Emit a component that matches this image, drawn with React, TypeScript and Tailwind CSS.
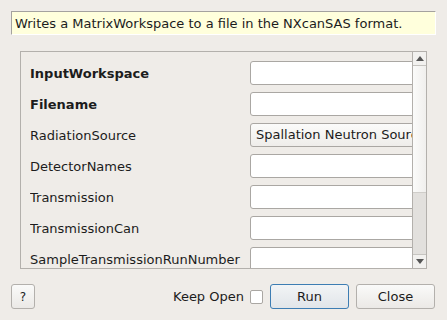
const rows: { label: string; bold?: boolean; value?: string; combo?: boolean }[] = [
  { label: "InputWorkspace", bold: true },
  { label: "Filename", bold: true },
  { label: "RadiationSource", value: "Spallation Neutron Source", combo: true },
  { label: "DetectorNames" },
  { label: "Transmission" },
  { label: "TransmissionCan" },
  { label: "SampleTransmissionRunNumber" },
];

export default function App() {
  return (
    <div className="w-[447px] h-[320px] bg-[#efece8] font-['DejaVu_Sans',sans-serif] text-[13px] text-[#1c1c1c] flex flex-col overflow-hidden">
      {/* description */}
      <div className="ml-[11px] mt-[11px] w-[425px] h-[24px] bg-[#ffffdc] border-t border-l border-[#a4a29f] border-r border-b border-r-white border-b-white flex items-center pl-[3px] leading-none">
        Writes a MatrixWorkspace to a file in the NXcanSAS format.
      </div>

      {/* property list */}
      <div className="ml-[20px] mt-[16px] w-[407px] h-[218px] border border-[#b3b0ac] flex overflow-hidden">
        <div className="flex-1 min-w-0 overflow-hidden pt-[9px] pl-[9px] flex flex-col gap-[7px]">
          {rows.map((r) => (
            <div key={r.label} className="flex items-center h-[24px] shrink-0">
              <div className={`w-[220px] shrink-0 whitespace-nowrap overflow-hidden pt-[1px] ${r.bold ? "font-bold" : ""}`}>
                {r.label}
              </div>
              <div
                className={`w-[170px] h-[24px] shrink-0 rounded-[3px] border border-[#aaa7a3] flex items-center pl-[5px] whitespace-nowrap overflow-hidden ${
                  r.combo ? "bg-gradient-to-b from-[#fbfbfa] to-[#efedea]" : "bg-white"
                }`}
              >
                {r.value}
              </div>
            </div>
          ))}
        </div>
        {/* scrollbar */}
        <div className="w-[14px] shrink-0 border-l border-[#b3b0ac] flex flex-col bg-[#e2e0dd]">
          <div className="h-[14px] border-b border-[#c6c4c0] bg-[#f2f1ef] flex items-center justify-center">
            <svg width="8" height="5" viewBox="0 0 8 5">
              <path d="M0 5 L4 0 L8 5 Z" fill="#555" />
            </svg>
          </div>
          <div className="h-[127px] bg-gradient-to-r from-[#fbfbfa] to-[#f0efed] border-b border-[#cfcdc9]" />
          <div className="flex-1" />
          <div className="h-[14px] border-t border-[#c6c4c0] bg-[#f2f1ef] flex items-center justify-center">
            <svg width="8" height="5" viewBox="0 0 8 5">
              <path d="M0 0 L8 0 L4 5 Z" fill="#555" />
            </svg>
          </div>
        </div>
      </div>

      {/* buttons */}
      <div className="mt-[15px] flex items-center h-[25px]">
        <button className="ml-[11px] w-[24px] h-[25px] rounded-[3px] border border-[#b3b0ac] bg-gradient-to-b from-[#fafaf9] to-[#ebe9e6] text-[12px] leading-none">
          ?
        </button>
        <span className="ml-[138px] whitespace-nowrap">Keep Open</span>
        <span className="ml-[6px] w-[13px] h-[14px] bg-white border border-[#aaa7a3] rounded-[2px]" />
        <button className="ml-[7px] w-[79px] h-[25px] rounded-[3px] border border-[#3d7db3] bg-gradient-to-b from-[#f2f4f6] to-[#e1e5e9]">
          Run
        </button>
        <button className="ml-[7px] w-[79px] h-[25px] rounded-[3px] border border-[#b3b0ac] bg-gradient-to-b from-[#fafaf9] to-[#ebe9e6]">
          Close
        </button>
      </div>
    </div>
  );
}
